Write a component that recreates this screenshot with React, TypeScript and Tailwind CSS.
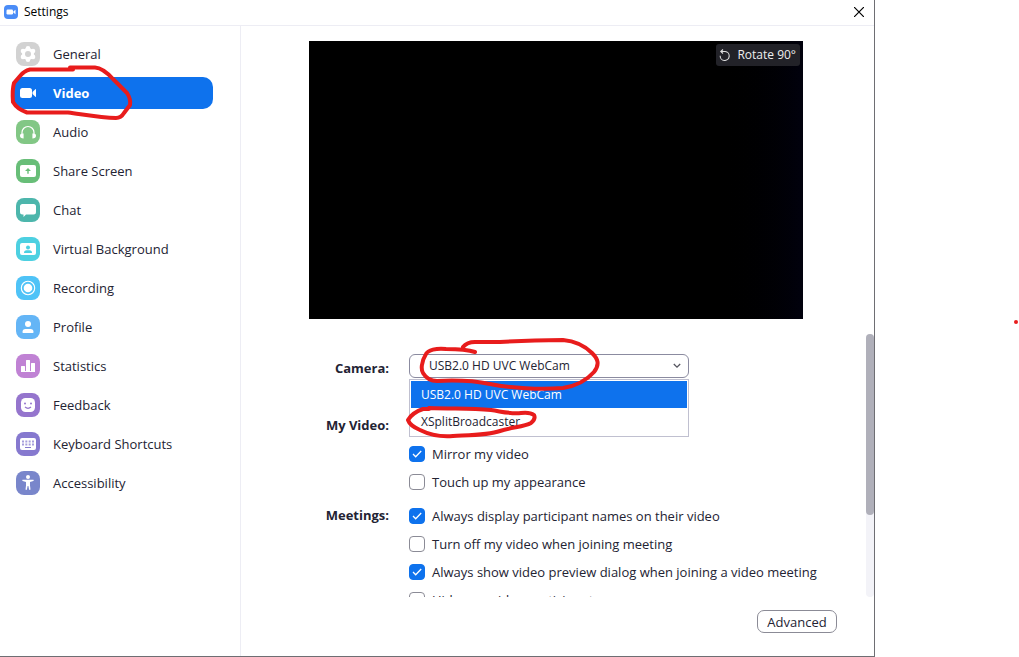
import { useState, type ReactNode } from "react";

type NavItem = { name: string; color: string; icon: ReactNode };

const navItems: NavItem[] = [
  {
    name: "General",
    color: "bg-[#d2d2d2]",
    icon: (
      <>
        <g fill="#fff">
          <circle cx="12" cy="12" r="6" />
          <circle cx="12" cy="6.2" r="2.3" />
          <circle cx="12" cy="17.8" r="2.3" />
          <circle cx="7" cy="9.1" r="2.3" />
          <circle cx="17" cy="9.1" r="2.3" />
          <circle cx="7" cy="14.9" r="2.3" />
          <circle cx="17" cy="14.9" r="2.3" />
        </g>
        <circle cx="12" cy="12" r="3" fill="#d2d2d2" />
      </>
    ),
  },
  {
    name: "Video",
    color: "bg-transparent",
    icon: (
      <g fill="#fff">
        <rect x="4" y="7" width="12" height="10" rx="2.5" />
        <path d="M16.5 11 19.3 8.3q.7-.5.7.4v6.6q0 .9-.7.4L16.5 13z" />
      </g>
    ),
  },
  {
    name: "Audio",
    color: "bg-[#82c785]",
    icon: (
      <>
        <path d="M6 15v-2.5a6 6 0 0 1 12 0V15" fill="none" stroke="#fff" strokeWidth="1.2" />
        <path d="M7.6 13.5v5Q4 18.5 4 15.8T7.6 13.5zM16.4 13.5v5Q20 18.5 20 15.8T16.4 13.5z" fill="#fff" />
      </>
    ),
  },
  {
    name: "Share Screen",
    color: "bg-[#68be78]",
    icon: (
      <>
        <rect x="4" y="6" width="16" height="12" rx="2" fill="#fff" />
        <path d="M12 9 9 12h2.3v2.8h1.4V12H15z" fill="#68be78" />
      </>
    ),
  },
  {
    name: "Chat",
    color: "bg-[#4db6ac]",
    icon: (
      <path
        d="M6.5 6h11Q20 6 20 8.5v5.5Q20 16.5 17.5 16.5H10L7.5 19V16.5H6.5Q4 16.5 4 14V8.5Q4 6 6.5 6z"
        fill="#fff"
      />
    ),
  },
  {
    name: "Virtual Background",
    color: "bg-[#4dd0e1]",
    icon: (
      <>
        <rect x="4" y="6" width="16" height="12" rx="2" fill="#fff" />
        <circle cx="12" cy="10.5" r="2" fill="#4dd0e1" />
        <path d="M8 16Q8 13.3 10.5 13.3h3Q16 13.3 16 16z" fill="#4dd0e1" />
      </>
    ),
  },
  {
    name: "Recording",
    color: "bg-[#4fc3f7]",
    icon: (
      <>
        <circle cx="12" cy="12" r="6.7" fill="none" stroke="#fff" strokeWidth="1.1" />
        <circle cx="12" cy="12" r="4.3" fill="#fff" />
      </>
    ),
  },
  {
    name: "Profile",
    color: "bg-[#64b5f6]",
    icon: (
      <g fill="#fff">
        <circle cx="12" cy="9" r="3" />
        <path d="M7 18q-.5 0-.5-1 0-3 3-3h5q3 0 3 3 0 1-.5 1z" />
      </g>
    ),
  },
  {
    name: "Statistics",
    color: "bg-[#c082d4]",
    icon: (
      <g fill="#fff">
        <rect x="5" y="12" width="4" height="6" rx=".5" />
        <rect x="10" y="6" width="4" height="12" rx=".5" />
        <rect x="15" y="9" width="4" height="9" rx=".5" />
        <rect x="5" y="17" width="14" height="1" />
      </g>
    ),
  },
  {
    name: "Feedback",
    color: "bg-[#9575cd]",
    icon: (
      <>
        <rect x="5" y="5" width="14" height="14" rx="4.5" fill="#fff" />
        <g fill="#9575cd">
          <circle cx="9" cy="10.5" r="1" />
          <circle cx="15" cy="10.5" r="1" />
        </g>
        <path d="M9 14q3 2.6 6 0" fill="none" stroke="#9575cd" strokeWidth="1.2" />
      </>
    ),
  },
  {
    name: "Keyboard Shortcuts",
    color: "bg-[#8679cf]",
    icon: (
      <>
        <rect x="4" y="6" width="16" height="12" rx="2" fill="#fff" />
        <path d="M6 9.5h12M6 12.5h12" stroke="#a79edc" strokeWidth="2" strokeDasharray="2 1.333" />
        <path d="M9 15.5h6" stroke="#8679cf" strokeWidth="1.2" />
      </>
    ),
  },
  {
    name: "Accessibility",
    color: "bg-[#7986cb]",
    icon: (
      <g fill="#fff">
        <circle cx="12" cy="6" r="2" />
        <path d="M6.5 8.7h11q.7.9-.2 1.3L14 11v3.500l.5 4q-.8.9-1.400 0L12.400 15h-.8l-.7 3.500q-.6.9-1.400 0l.5-4V11L6.700 10q-.9-.4-.2-1.300z" />
      </g>
    ),
  },
];

function Check({ label, initial = false }: { label: string; initial?: boolean }) {
  const [on, setOn] = useState(initial);
  return (
    <label className="flex h-7 items-center gap-[7px] whitespace-nowrap">
      <span className="grid size-4 shrink-0">
        <input
          type="checkbox"
          checked={on}
          onChange={() => setOn(!on)}
          className="col-start-1 row-start-1 size-4 appearance-none rounded-[4px] border border-[#8b8b96] bg-white checked:border-[#0e72ed] checked:bg-[#0e72ed]"
        />
        {on && (
          <svg viewBox="0 0 16 16" className="pointer-events-none col-start-1 row-start-1 size-4" aria-hidden="true">
            <path d="m4 8 2.7 2.7L12.2 5" fill="none" stroke="#fff" strokeWidth="1.3" />
          </svg>
        )}
      </span>
      {label}
    </label>
  );
}

function Sidebar() {
  return (
    <nav className="flex w-[241px] shrink-0 flex-col gap-[7px] border-r border-[#ededf4] pt-3 pr-[27px] pl-3">
      {navItems.map((item) => (
        <a
          key={item.name}
          href="#"
          aria-current={item.name === "Video" ? "page" : undefined}
          className="flex h-8 items-center gap-[13px] rounded-[10px] pl-1 whitespace-nowrap aria-[current=page]:bg-[#0e72ed] aria-[current=page]:font-bold aria-[current=page]:text-white"
        >
          <svg viewBox="0 0 24 24" className={`size-6 shrink-0 rounded-[8px] ${item.color}`} aria-hidden="true">
            {item.icon}
          </svg>
          {item.name}
        </a>
      ))}
    </nav>
  );
}

function CameraPicker() {
  return (
    <div className="relative w-[280px]">
      <select
        id="camera"
        className="block h-6 w-full appearance-none rounded-[6px] border border-[#8b8ba0] bg-white pl-[19px] text-[12px]"
      >
        <option>USB2.0 HD UVC WebCam</option>
        <option>XSplitBroadcaster</option>
      </select>
      <svg viewBox="0 0 8 6" className="pointer-events-none absolute top-[9px] right-2 h-[6px] w-2" aria-hidden="true">
        <path d="m.8 1 3.200 3.200L7.200 1" fill="none" stroke="#55555f" strokeWidth="1.3" />
      </svg>
      <ul
        role="listbox"
        aria-label="Camera"
        className="absolute top-full left-0 mt-px w-full border border-[#c0c0d0] bg-white p-px text-[12px]"
      >
        <li role="option" aria-selected="true" className="flex h-[27px] items-center bg-[#0e72ed] pl-[10px] text-white">
          USB2.0 HD UVC WebCam
        </li>
        <li role="option" aria-selected="false" className="flex h-[27px] items-center pl-[10px]">
          XSplitBroadcaster
        </li>
      </ul>
    </div>
  );
}

function Markup() {
  return (
    <svg
      width="1019"
      height="657"
      viewBox="0 0 1019 657"
      className="pointer-events-none absolute top-0 left-0"
      fill="none"
      stroke="#e81c1c"
      strokeWidth="4"
      strokeLinecap="round"
      strokeLinejoin="round"
      aria-hidden="true"
    >
      <path d="M73 69.500H30Q24 71 20 76L14 83Q12 90 13 102Q17 109 27 112.500H68C86 115 101 118 116 118Q121 118 124 113L130 105Q131 99 127 93L113 79Q103 68 95 67.500H70" />
      <path d="M475 352C466 349 456 349 446 349C436 348 428 350 426 354C421 362 421 370 423 373C426 378 431 381 437 381C457 380 475 381 490 384C510 388 540 390 563 388C576 386 587 380 594 372C600 364 598 359 592 353C584 345 574 341 563 340C535 340 515 341 500 342H475Q467 342 463 347" />
      <path d="M429 409H423C417 411 411 415 408 420C409 423 413 427 420 430C428 434 441 437 453 436C474 435 489 435 500 431C512 427 524 427 531 423Q536 419 534 415Q530 412 521 413C510 414 504 412 491 410C470 408 455 409 429 408" />
      <circle cx="1016" cy="322" r="2" fill="#e81c1c" stroke="none" />
    </svg>
  );
}

export default function App() {
  return (
    <div className="relative h-screen overflow-hidden bg-white font-['Open_Sans','Noto_Sans',sans-serif] text-[13px] leading-5 text-[#232333]">
      <main className="mr-36 flex h-full flex-col border-r border-b border-[#6e6e73]">
        <header className="flex h-[26px] shrink-0 items-center justify-between border-b border-[#ededf4] pr-[10px] pb-px pl-1 text-[12px] text-black">
          <h1 className="flex items-center gap-[6px]">
            <svg viewBox="0 0 14 14" className="size-[14px]" aria-hidden="true">
              <rect width="14" height="14" rx="4" fill="#4a8cf7" />
              <rect x="2.5" y="4.5" width="6.5" height="5" rx="1.2" fill="#fff" />
              <path d="m9.3 6.5 2.200-1.700v4.400L9.300 7.500z" fill="#fff" />
            </svg>
            Settings
          </h1>
          <button aria-label="Close">
            <svg viewBox="0 0 10 10" className="size-[10px]" aria-hidden="true">
              <path d="m0 0 10 10M10 0 0 10" stroke="#000" strokeWidth="1.2" />
            </svg>
          </button>
        </header>
        <div className="flex min-h-0 flex-1">
          <Sidebar />
          <section className="flex min-w-0 flex-1 flex-col">
            <div className="flex min-h-0 flex-1">
              <div className="min-w-0 flex-1 overflow-hidden pt-[15px] pl-[68px]">
                <div className="flex h-[278px] max-w-[494px] items-start justify-end bg-linear-to-r from-black from-80% to-[#01010d] p-[3px]">
                  <button className="flex h-[22px] items-center gap-[6px] rounded-[3px] bg-[#222228] pr-1 pl-[3px] text-[12px] text-[#eeeeee]">
                    <svg viewBox="0 0 12 12" className="size-3" aria-hidden="true">
                      <path
                        d="M2 2.5h4.2a4.500 4.500 0 1 1-5 4.200M4 .5l-2.200 2L4 4.500"
                        fill="none"
                        stroke="#ddd"
                        strokeWidth="1.1"
                      />
                    </svg>
                    Rotate 90°
                  </button>
                </div>
                <div className="mt-[35px] grid grid-cols-[80px_1fr] gap-x-5">
                  <label htmlFor="camera" className="pt-1 text-right font-bold">
                    Camera:
                  </label>
                  <CameraPicker />
                  <h2 className="pt-[37px] text-right font-bold">My Video:</h2>
                  <div className="pt-[62px]">
                    <Check label="Mirror my video" initial />
                    <Check label="Touch up my appearance" />
                  </div>
                  <h2 className="pt-[9px] text-right font-bold">Meetings:</h2>
                  <div className="pt-[6px]">
                    <Check label="Always display participant names on their video" initial />
                    <Check label="Turn off my video when joining meeting" />
                    <Check label="Always show video preview dialog when joining a video meeting" initial />
                    <Check label="Hide non-video participants" />
                  </div>
                </div>
              </div>
              <div className="flex w-2 shrink-0 flex-col pt-[308px]">
                <div className="flex-1 rounded-full bg-[#f3f3f8]">
                  <div className="h-[181px] rounded-full bg-[#b0b0ba]" />
                </div>
              </div>
            </div>
            <footer className="flex h-[59px] shrink-0 items-start justify-end pt-[13px] pr-[37px]">
              <button className="h-[23px] w-20 rounded-[7px] border border-[#8b8b96] leading-5">Advanced</button>
            </footer>
          </section>
        </div>
      </main>
      <Markup />
    </div>
  );
}
